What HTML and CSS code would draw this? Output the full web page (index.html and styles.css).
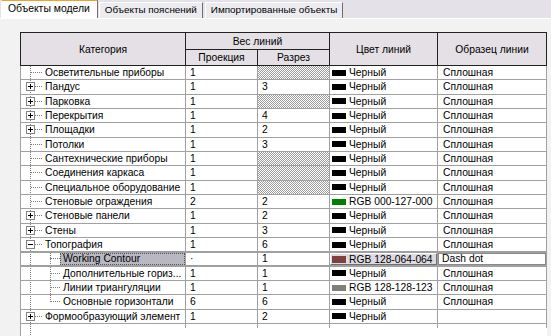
FILE: index.html
```html
<!DOCTYPE html>
<html lang="ru">
<head>
<meta charset="utf-8">
<title>Видимость/графика</title>
<link rel="stylesheet" href="styles.css">
</head>
<body>
<div class="tabs">
  <div class="tab active">Объекты модели</div>
  <div class="tab">Объекты пояснений</div>
  <div class="tab">Импортированные объекты</div>
</div>
<div class="panel">
  <div class="head">
    <div class="h cat-h">Категория</div>
    <div class="h weight-h">Вес линий</div>
    <div class="h color-h">Цвет линий</div>
    <div class="h pat-h">Образец линии</div>
    <div class="h">Проекция</div>
    <div class="h">Разрез</div>
  </div>
  <div class="body">
    <div class="row">
      <div class="cat"><span class="twig leaf"></span><span class="label">Осветительные приборы</span></div>
      <div class="num">1</div><div class="num hatch"></div>
      <div class="col"><i class="sw"></i>Черный</div><div class="pat">Сплошная</div>
    </div>
    <div class="row">
      <div class="cat"><svg class="exp" width="9" height="9" viewBox="0 0 9 9"><rect x=".5" y=".5" width="8" height="8" fill="#fff" stroke="#848484"/><path d="M2 4.5h5M4.5 2v5" stroke="#000"/></svg><span class="twig"></span><span class="label">Пандус</span></div>
      <div class="num">1</div><div class="num">3</div>
      <div class="col"><i class="sw"></i>Черный</div><div class="pat">Сплошная</div>
    </div>
    <div class="row">
      <div class="cat"><svg class="exp" width="9" height="9" viewBox="0 0 9 9"><rect x=".5" y=".5" width="8" height="8" fill="#fff" stroke="#848484"/><path d="M2 4.5h5M4.5 2v5" stroke="#000"/></svg><span class="twig"></span><span class="label">Парковка</span></div>
      <div class="num">1</div><div class="num hatch"></div>
      <div class="col"><i class="sw"></i>Черный</div><div class="pat">Сплошная</div>
    </div>
    <div class="row">
      <div class="cat"><svg class="exp" width="9" height="9" viewBox="0 0 9 9"><rect x=".5" y=".5" width="8" height="8" fill="#fff" stroke="#848484"/><path d="M2 4.5h5M4.5 2v5" stroke="#000"/></svg><span class="twig"></span><span class="label">Перекрытия</span></div>
      <div class="num">1</div><div class="num">4</div>
      <div class="col"><i class="sw"></i>Черный</div><div class="pat">Сплошная</div>
    </div>
    <div class="row">
      <div class="cat"><svg class="exp" width="9" height="9" viewBox="0 0 9 9"><rect x=".5" y=".5" width="8" height="8" fill="#fff" stroke="#848484"/><path d="M2 4.5h5M4.5 2v5" stroke="#000"/></svg><span class="twig"></span><span class="label">Площадки</span></div>
      <div class="num">1</div><div class="num">2</div>
      <div class="col"><i class="sw"></i>Черный</div><div class="pat">Сплошная</div>
    </div>
    <div class="row">
      <div class="cat"><span class="twig leaf"></span><span class="label">Потолки</span></div>
      <div class="num">1</div><div class="num">3</div>
      <div class="col"><i class="sw"></i>Черный</div><div class="pat">Сплошная</div>
    </div>
    <div class="row">
      <div class="cat"><span class="twig leaf"></span><span class="label">Сантехнические приборы</span></div>
      <div class="num">1</div><div class="num hatch"></div>
      <div class="col"><i class="sw"></i>Черный</div><div class="pat">Сплошная</div>
    </div>
    <div class="row">
      <div class="cat"><span class="twig leaf"></span><span class="label">Соединения каркаса</span></div>
      <div class="num">1</div><div class="num hatch"></div>
      <div class="col"><i class="sw"></i>Черный</div><div class="pat">Сплошная</div>
    </div>
    <div class="row">
      <div class="cat"><span class="twig leaf"></span><span class="label">Специальное оборудование</span></div>
      <div class="num">1</div><div class="num hatch"></div>
      <div class="col"><i class="sw"></i>Черный</div><div class="pat">Сплошная</div>
    </div>
    <div class="row">
      <div class="cat"><span class="twig leaf"></span><span class="label">Стеновые ограждения</span></div>
      <div class="num">2</div><div class="num">2</div>
      <div class="col"><i class="sw green"></i>RGB 000-127-000</div><div class="pat">Сплошная</div>
    </div>
    <div class="row">
      <div class="cat"><svg class="exp" width="9" height="9" viewBox="0 0 9 9"><rect x=".5" y=".5" width="8" height="8" fill="#fff" stroke="#848484"/><path d="M2 4.5h5M4.5 2v5" stroke="#000"/></svg><span class="twig"></span><span class="label">Стеновые панели</span></div>
      <div class="num">1</div><div class="num">2</div>
      <div class="col"><i class="sw"></i>Черный</div><div class="pat">Сплошная</div>
    </div>
    <div class="row">
      <div class="cat"><svg class="exp" width="9" height="9" viewBox="0 0 9 9"><rect x=".5" y=".5" width="8" height="8" fill="#fff" stroke="#848484"/><path d="M2 4.5h5M4.5 2v5" stroke="#000"/></svg><span class="twig"></span><span class="label">Стены</span></div>
      <div class="num">1</div><div class="num">3</div>
      <div class="col"><i class="sw"></i>Черный</div><div class="pat">Сплошная</div>
    </div>
    <div class="row">
      <div class="cat"><svg class="exp" width="9" height="9" viewBox="0 0 9 9"><rect x=".5" y=".5" width="8" height="8" fill="#fff" stroke="#848484"/><path d="M2 4.5h5" stroke="#000"/></svg><span class="twig"></span><span class="label">Топография</span></div>
      <div class="num">1</div><div class="num">6</div>
      <div class="col"><i class="sw"></i>Черный</div><div class="pat">Сплошная</div>
    </div>
    <div class="row edit">
      <div class="cat child"><span class="twig kid"></span><span class="label sel">Working Contour</span></div>
      <div class="num">·</div><div class="num">1</div>
      <div class="col"><span class="btn"><i class="sw brown"></i>RGB 128-064-064</span></div>
      <div class="pat"><span class="combo">Dash dot</span></div>
    </div>
    <div class="row">
      <div class="cat child"><span class="twig kid"></span><span class="label">Дополнительные гориз...</span></div>
      <div class="num">1</div><div class="num">1</div>
      <div class="col"><i class="sw"></i>Черный</div><div class="pat">Сплошная</div>
    </div>
    <div class="row">
      <div class="cat child"><span class="twig kid"></span><span class="label">Линии триангуляции</span></div>
      <div class="num">1</div><div class="num">1</div>
      <div class="col"><i class="sw gray"></i>RGB 128-128-123</div><div class="pat">Сплошная</div>
    </div>
    <div class="row">
      <div class="cat child last"><span class="twig kid"></span><span class="label">Основные горизонтали</span></div>
      <div class="num">6</div><div class="num">6</div>
      <div class="col"><i class="sw"></i>Черный</div><div class="pat">Сплошная</div>
    </div>
    <div class="row">
      <div class="cat"><svg class="exp" width="9" height="9" viewBox="0 0 9 9"><rect x=".5" y=".5" width="8" height="8" fill="#fff" stroke="#848484"/><path d="M2 4.5h5M4.5 2v5" stroke="#000"/></svg><span class="twig"></span><span class="label">Формообразующий элемент</span></div>
      <div class="num">1</div><div class="num">2</div>
      <div class="col"><i class="sw"></i>Черный</div><div class="pat"></div>
    </div>
    <div class="row tail">
      <div></div><div></div><div></div><div></div><div></div>
    </div>
  </div>
</div>
</body>
</html>
```

FILE: styles.css
```css
* { box-sizing: border-box; }

body {
  margin: 0;
  width: 551px;
  height: 336px;
  overflow: hidden;
  background: #f2f2f2;
  font: 10.3px "Liberation Sans", Arial, sans-serif;
  color: #000;
}

/* tab strip */
.tabs {
  display: flex;
  align-items: flex-end;
  height: 18px;
  padding-left: 1px;
  background: #e4e1e8;
  font-size: 9.9px;
}
.tab {
  height: 16px;
  padding: 0 5px;
  margin-right: 2px;
  line-height: 14px;
  white-space: nowrap;
  background: #ecebef;
  border: 1px solid #fff;
  border-right-color: #6e6e6e;
  border-bottom: none;
}
.tab.active {
  height: 18px;
  padding: 0 7px 0 6px;
  margin-right: 1px;
  line-height: 16px;
  font-size: 10.4px;
  background: #fff;
  border-top-color: #f0a030;
}

/* tab page */
.panel {
  padding: 13px 0 0 20px;
  border-top: 1px solid #fff;
}

/* header */
.head {
  display: grid;
  width: 527px;
  grid-template-columns: 165px 72px 72px 108px 109px;
  grid-template-rows: 17px 16px;
  background: #e4e0e6;
  border-top: 1px solid #222;
  border-left: 1px solid #222;
}
.h {
  display: flex;
  align-items: center;
  justify-content: center;
  border-right: 1px solid #222;
  border-bottom: 1px solid #222;
  white-space: nowrap;
}
.cat-h { grid-row: 1 / 3; grid-column: 1; }
.weight-h { grid-row: 1; grid-column: 2 / 4; }
.color-h { grid-row: 1 / 3; grid-column: 4; }
.pat-h { grid-row: 1 / 3; grid-column: 5; }

/* body */
.body {
  width: 527px;
  padding-bottom: 30px;
  border-left: 1px solid #a0a0a0;
  background-color: #fff;
  background-image: repeating-linear-gradient(to bottom, #7c7c7c 0 1px, transparent 1px 2px);
  background-size: 1px 100%;
  background-position: 9px 0;
  background-repeat: no-repeat;
}
.row {
  display: grid;
  grid-template-columns: 165px 72px 72px 108px 109px;
  height: 14.33px;
}
.row > div {
  display: flex;
  align-items: center;
  border-right: 1px solid #a0a0a0;
  border-bottom: 1px solid #a0a0a0;
  white-space: nowrap;
  overflow: hidden;
}
.row.tail { height: 4px; }
.row.tail > div { border-bottom: none; }

/* tree column */
.cat { padding-left: 5px; }
.exp { flex: none; display: block; }
.twig {
  flex: none;
  width: 7px;
  height: 0;
  border-top: 1px dotted #7c7c7c;
}
.twig.leaf { width: 11px; margin-left: 5px; }
.twig.kid { width: 10px; margin-left: 24px; }
.label { padding-left: 3px; }
.cat.child {
  background-image: repeating-linear-gradient(to bottom, #7c7c7c 0 1px, transparent 1px 2px);
  background-size: 1px 100%;
  background-position: 29px 0;
  background-repeat: no-repeat;
}
.cat.child.last { background-size: 1px 50%; }
.label.sel {
  align-self: stretch;
  flex: 1;
  display: flex;
  align-items: center;
  background: #b9b8c2;
  outline: 1px dotted #555;
  outline-offset: -1px;
}

/* value columns */
.num { padding-left: 4px; }
.num.hatch {
  background: repeating-conic-gradient(#9c9c9c 0 25%, #fff 0 50%) 0 0 / 2px 2px;
}
.col { padding-left: 2px; }
.sw {
  flex: none;
  width: 14px;
  height: 6px;
  margin-right: 3px;
  background: #000;
}
.sw.green { background: #008000; }
.sw.gray { background: #80807b; }
.sw.brown { background: #804040; height: 7px; }
.pat { padding-left: 5px; }

/* row being edited */
.row.edit > div { border-top: 1px solid #a0a0a0; border-bottom-width: 2px; }
.row.edit .col { padding: 0; }
.btn {
  flex: 1;
  align-self: stretch;
  display: flex;
  align-items: center;
  padding: 1px 0 0 1px;
  background: #dedae2;
  border: 1px solid #fff;
  border-right-color: #707070;
  border-bottom-color: #707070;
}
.row.edit .pat { padding: 0; }
.combo {
  flex: 1;
  align-self: stretch;
  display: flex;
  align-items: center;
  padding-left: 3px;
  border: 1px solid #8a8a8a;
}
```
